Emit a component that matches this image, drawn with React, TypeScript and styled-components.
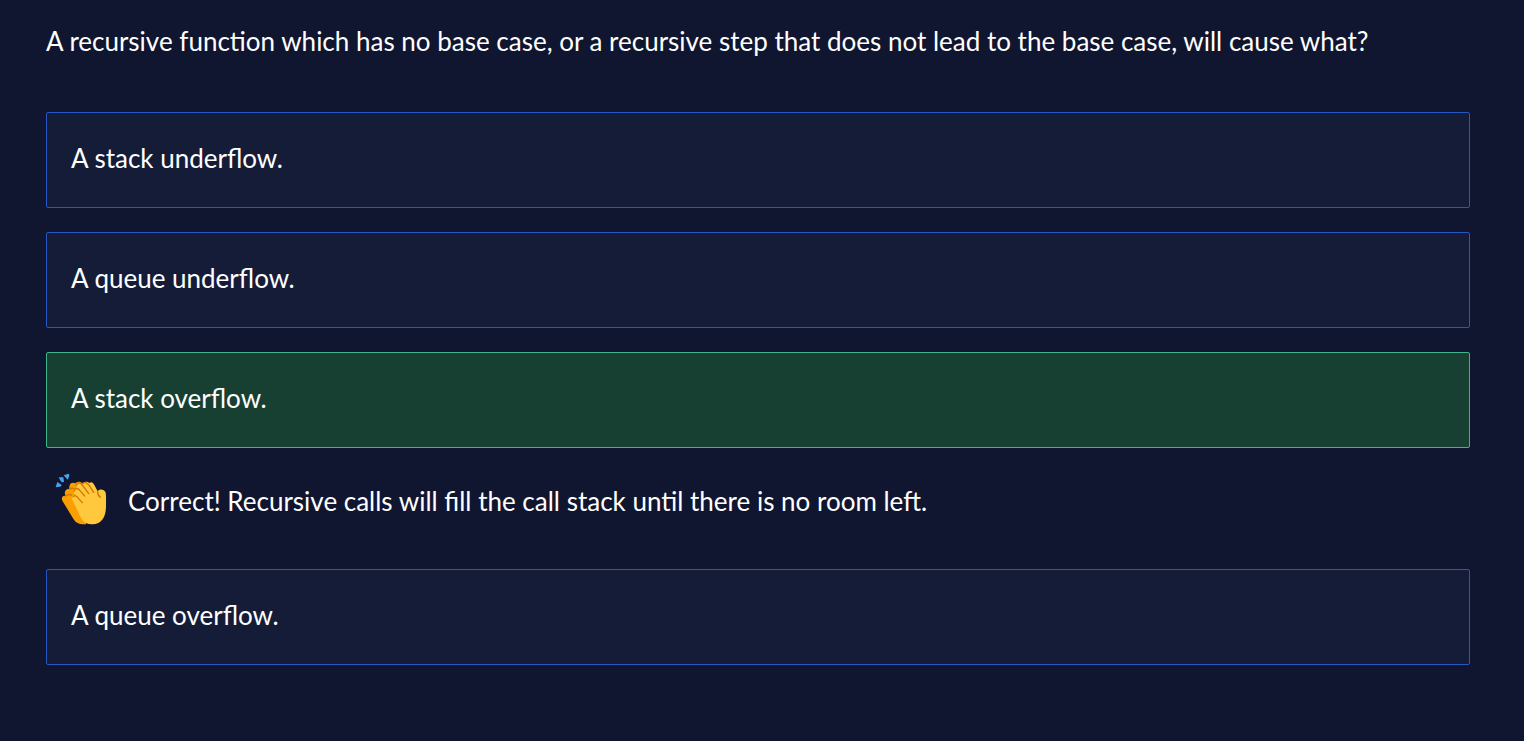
import React from "react";
import styled, { createGlobalStyle } from "styled-components";

const GlobalStyle = createGlobalStyle`
  * { box-sizing: border-box; }
  body {
    margin: 0;
    background: #10162f;
    color: #ffffff;
    font-family: Lato, "Liberation Sans", sans-serif;
    font-size: 26px;
    line-height: 42px;
  }
`;

const Quiz = styled.main`
  padding: 20px 54px 76px 46px;
`;

const Question = styled.h1`
  margin: 0 0 50px;
  font-size: inherit;
  font-weight: 400;
`;

const Answers = styled.ul`
  display: flex;
  flex-direction: column;
  gap: 24px;
  margin: 0;
  padding: 0;
  list-style: none;
`;

const Answer = styled.button<{ $correct?: boolean }>`
  display: block;
  width: 100%;
  padding: 24px 24px 28px;
  border: 1px solid ${(p) => (p.$correct ? "#3db489" : "#2557c7")};
  border-radius: 2px;
  background: ${(p) => (p.$correct ? "#174032" : "#151c38")};
  color: inherit;
  font: inherit;
  text-align: left;
  cursor: pointer;
`;

const Feedback = styled.div`
  display: flex;
  align-items: center;
  gap: 12px;
  padding: 18px 0 13px;
`;

const FeedbackText = styled.p`
  margin: 0;
  padding-top: 3px;
`;

const ClapIcon = () => (
  <svg width="70" height="66" viewBox="0 0 210 198" aria-hidden="true">
    <g fill="#42a5f5">
      <path d="M34 48 L47 57 Q46 63 39 62 L29 64 Z" />
      <path d="M38 34 L52 34 L54 47 Q49 51 44 45 Z" />
      <path d="M53 28 L68 23 Q72 28 69 32 L65 41 Z" />
    </g>
    <path
      fill="#f9a000"
      d="M49 104 C44 94 53 86 60 91 C52 80 58 67 70 69 C68 54 77 46 88 52 C94 46 103 46 109 52 L155 115 L119 175 C99 176 88 170 80 155 Z"
    />
    <path
      fill="#ffc83d"
      d="M79 101 C73 91 84 83 91 91 L83 80 C78 70 86 63 95 69 L90 61 C89 51 101 46 107 55 C112 46 124 45 130 51 C136 46 142 51 145 57 L155 76 C159 69 171 68 178 77 C181 84 180 102 180 119 C180 151 169 174 139 175 C113 176 104 157 97 139 Z"
    />
    <g fill="none" stroke="#d47706" strokeWidth="4" strokeLinecap="round" strokeLinejoin="round">
      <path d="M59 90 Q67 84 77 87" />
      <path d="M70 70 Q78 64 86 69" />
      <path d="M81 93 C85 85 93 90 97 97 L109 110" />
      <path d="M84 76 C87 64 96 66 102 74 L116 90" />
      <path d="M91 59 C94 48 103 49 109 57 L128 83" />
      <path d="M109 53 C118 46 125 51 130 59 L143 79" />
      <path d="M155 77 C154 86 158 90 163 94" />
    </g>
  </svg>
);

export default function App() {
  return (
    <>
      <GlobalStyle />
      <Quiz>
        <Question>
          A recursive function which has no base case, or a recursive step that does not lead to the base case, will cause what?
        </Question>
        <Answers>
          <li>
            <Answer type="button">A stack underflow.</Answer>
          </li>
          <li>
            <Answer type="button">A queue underflow.</Answer>
          </li>
          <li>
            <Answer type="button" $correct>
              A stack overflow.
            </Answer>
            <Feedback role="status">
              <ClapIcon />
              <FeedbackText>Correct! Recursive calls will fill the call stack until there is no room left.</FeedbackText>
            </Feedback>
          </li>
          <li>
            <Answer type="button">A queue overflow.</Answer>
          </li>
        </Answers>
      </Quiz>
    </>
  );
}
